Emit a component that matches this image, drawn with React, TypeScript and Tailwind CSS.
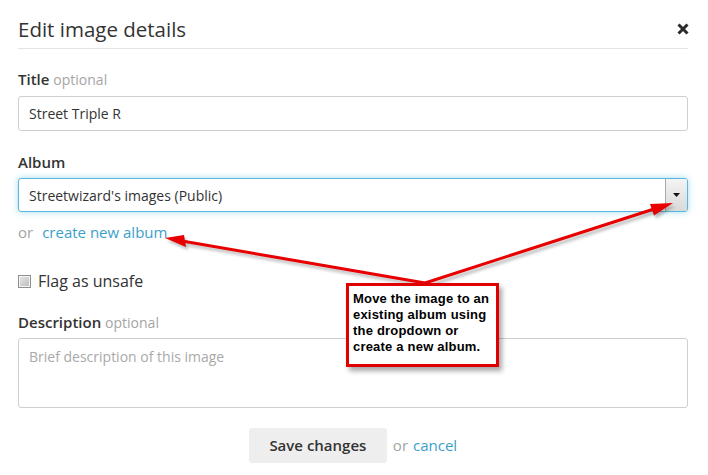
export default function App() {
  return (
    <div className="relative w-[708px] h-[475px] bg-white pl-[18px] pr-[20px] font-['Open_Sans',sans-serif] text-[#333] overflow-hidden">
      {/* header */}
      <div className="h-[49px] pt-[10px] flex items-center justify-between border-b border-[#e3e3e3]">
        <h1 className="text-[20.5px] leading-[28px] font-normal text-[#333]">Edit image details</h1>
        <svg width="12" height="12" viewBox="0 0 12 12" className="mr-[-1px]">
          <path d="M1.5 1.5 L10.5 10.5 M10.5 1.5 L1.5 10.5" stroke="#2b2b2b" strokeWidth="3" strokeLinecap="butt" />
        </svg>
      </div>

      {/* title */}
      <div className="mt-[20px] leading-[20px] text-[15px]">
        <span className="font-semibold text-[#333]">Title</span>{" "}
        <span className="text-[#a5a5a5] text-[14px]">optional</span>
      </div>
      <div className="mt-[6px] h-[35px] border border-[#cfcfcf] rounded-[3px] flex items-center px-[10px] text-[14px] text-[#333]">
        Street Triple R
      </div>

      {/* album */}
      <div className="mt-[21px] leading-[20px] text-[15px] font-semibold">Album</div>
      <div className="mt-[6px] h-[34px] border border-[#5bb6dd] rounded-[3px] flex items-stretch shadow-[0_0_6px_rgba(80,190,230,0.55)]">
        <div className="flex-1 flex items-center px-[10px] text-[14px]">Streetwizard's images (Public)</div>
        <div className="w-[22px] border-l border-[#a9a9a9] bg-gradient-to-b from-[#f4f4f4] to-[#d9d9d9] flex items-center justify-center rounded-r-[2px]">
          <svg width="7" height="4" viewBox="0 0 7 4">
            <path d="M0 0 L7 0 L3.5 4 Z" fill="#111" />
          </svg>
        </div>
      </div>
      <div className="mt-[10px] leading-[20px] text-[15px]">
        <span className="text-[#a5a5a5]">or</span>
        <span className="ml-[9px] text-[#3a9fc9]">create new album</span>
      </div>

      {/* flag */}
      <div className="mt-[28px] h-[22px] flex items-center gap-[7px]">
        <div className="w-[13px] h-[13px] border border-[#8f8f8f] bg-gradient-to-br from-[#e8e8e8] to-[#bdbdbd] shadow-[inset_0_0_0_1px_#f4f4f4]" />
        <span className="text-[16px] text-[#333]">Flag as unsafe</span>
      </div>

      {/* description */}
      <div className="mt-[20px] leading-[20px] text-[15px]">
        <span className="font-semibold text-[#333]">Description</span>{" "}
        <span className="text-[#a5a5a5] text-[14px]">optional</span>
      </div>
      <div className="mt-[5px] h-[70px] border border-[#cfcfcf] rounded-[3px] px-[10px] pt-[7px] text-[14px] text-[#a9a9a9] leading-[22px]">
        Brief description of this image
      </div>

      {/* footer */}
      <div className="mt-[20px] flex items-center justify-center">
        <div className="h-[35px] w-[138px] rounded-[3px] bg-[#eeeeee] flex items-center justify-center text-[15px] font-semibold text-[#333]">
          Save changes
        </div>
        <span className="ml-[6px] text-[15px] text-[#a5a5a5]">or</span>
        <span className="ml-[5px] text-[15px] text-[#3a9fc9]">cancel</span>
      </div>

      {/* annotation arrows */}
      <svg className="absolute inset-0 pointer-events-none" width="708" height="475" viewBox="0 0 708 475">
        <defs>
          <filter id="blur" x="-10%" y="-10%" width="120%" height="120%">
            <feGaussianBlur stdDeviation="1.5" />
          </filter>
        </defs>
        <g filter="url(#blur)" opacity="0.35" transform="translate(2 3)">
          <path d="M425 283 L182 241" stroke="#444" strokeWidth="3" fill="none" />
          <path d="M165 238 L184 235 L186 247 Z" fill="#444" />
          <path d="M425 283 L654 209" stroke="#444" strokeWidth="3" fill="none" />
          <path d="M673 203 L650 204 L654 215.5 Z" fill="#444" />
        </g>
        <path d="M425 283 L182 241" stroke="#e80000" strokeWidth="3" fill="none" />
        <path d="M165 238 L184 235 L186 247 Z" fill="#e80000" />
        <path d="M425 283 L654 209" stroke="#e80000" strokeWidth="3" fill="none" />
        <path d="M673 203 L650 204 L654 215.5 Z" fill="#e80000" />
      </svg>

      {/* callout */}
      <div className="absolute left-[346px] top-[283px] w-[153px] h-[84px] border-[3px] border-[#e00000] bg-white pl-[4px] pt-[5px] shadow-[3px_4px_5px_rgba(0,0,0,0.35)] font-['Liberation_Sans',Arial,sans-serif] font-bold text-[13px] leading-[16px] text-black tracking-[0.2px]">
        Move the image to an
        <br />
        existing album using
        <br />
        the dropdown or
        <br />
        create a new album.
      </div>
    </div>
  );
}
